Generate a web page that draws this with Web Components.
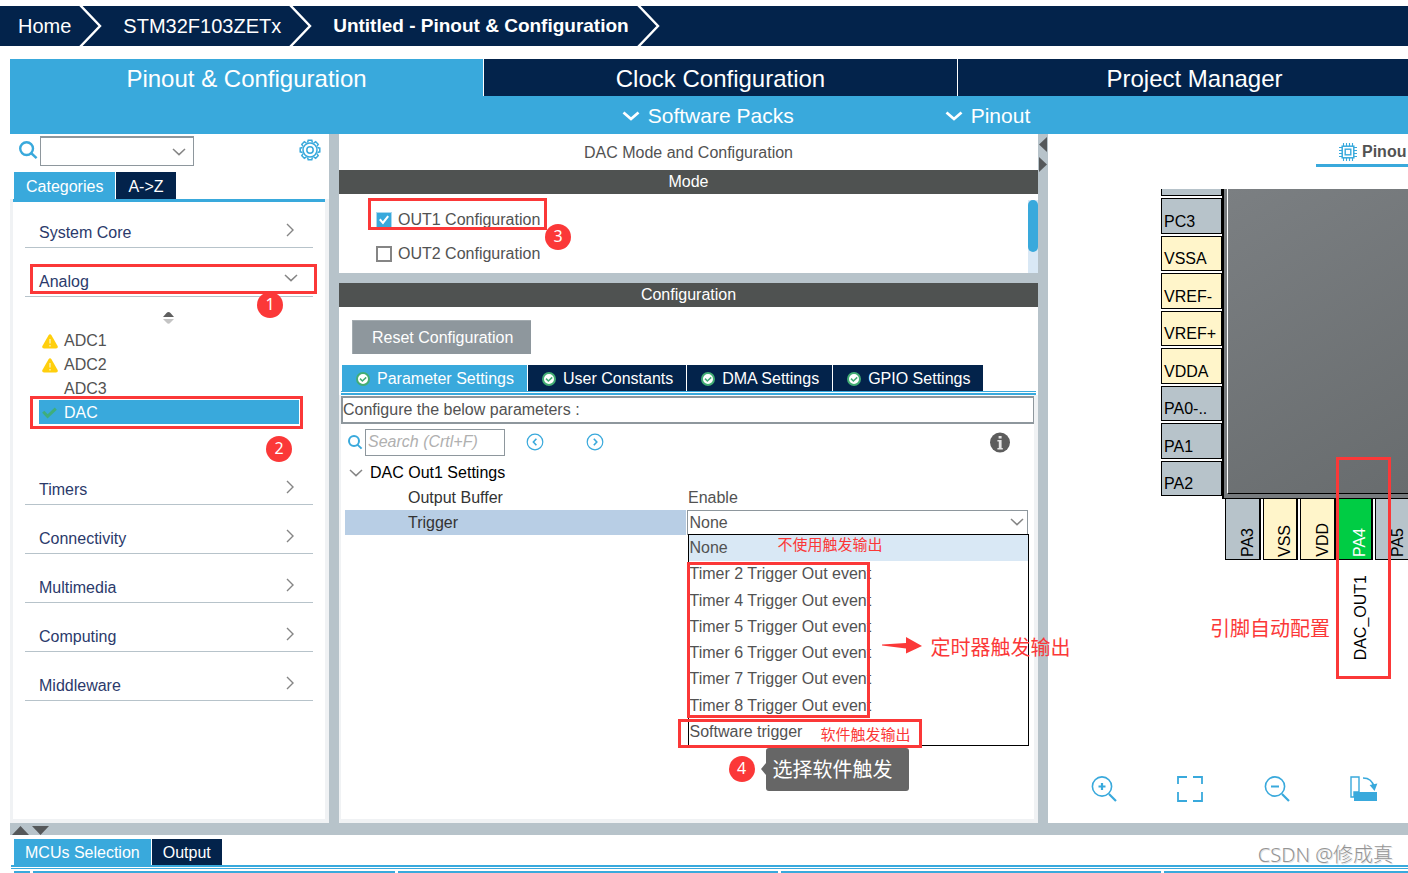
<!DOCTYPE html>
<html lang="zh-CN">
<head>
<meta charset="utf-8">
<meta name="viewport" content="width=device-width, initial-scale=1">
<title>STM32CubeMX - Pinout &amp; Configuration</title>
<style>
  :root {
    --navy: #03234b;
    --blue: #39a9dc;
    --steel: #b7c3ca;
    --frame: #f0f2f4;
    --border: #8e979d;
    --bar: #4f5251;
    --text: #525252;
    --mark: #fb3838;
    --cjk: "Liberation Sans", "Noto Sans CJK SC", sans-serif;
  }
  body {
    margin: 0;
    background: #fff;
    color: var(--text);
    font: 16px/24px "Liberation Sans", "Noto Sans CJK SC", sans-serif;
  }
</style>
</head>
<body>
<cube-app></cube-app>
<script>
const define = (name, html, setup) => {
  const template = document.createElement('template');
  template.innerHTML = html;
  customElements.define(name, class extends HTMLElement {
    constructor() {
      super();
      this.attachShadow({ mode: 'open' }).append(template.content.cloneNode(true));
    }
    connectedCallback() {
      if (setup) setup(this, this.shadowRoot);
    }
  });
};

/* ---------- icons ---------- */
const gearTeeth = Array.from({ length: 8 }, (_, i) =>
  `<path transform="rotate(${i * 45} 11 11)" d="M8.6 3.6 L9.2 1.2 H12.8 L13.4 3.6"/>`).join('');
const icons = {
  search: [20, 20, '<g fill="none" stroke="#39a9dc" stroke-width="2.4"><circle cx="7.6" cy="8.6" r="6.4"/><path d="M12 13 L17.6 18.2"/></g>'],
  searchSmall: [16, 16, '<g fill="none" stroke="#39a9dc" stroke-width="2"><circle cx="7" cy="7" r="5"/><path d="M10.4 10.6 L14.6 14.6"/></g>'],
  gear: [22, 22, `<g fill="none" stroke="#39a9dc" stroke-width="1.5"><circle cx="11" cy="11" r="7"/><circle cx="11" cy="11" r="3.2"/>${gearTeeth}</g>`],
  right: [8, 14, '<path d="M1 1 L7 7 L1 13" fill="none" stroke="#858585" stroke-width="1.4"/>'],
  down: [14, 8, '<path d="M1 1 L7 6.6 L13 1" fill="none" stroke="#858585" stroke-width="1.5"/>'],
  downBold: [18, 10, '<path d="M1.5 1.5 L9 8 L16.5 1.5" fill="none" stroke="#fff" stroke-width="2.8"/>'],
  sort: [11, 12, '<path d="M0 5 L3.5 1 Q5.5 -1 7.5 1 L11 5Z" fill="#5f5f5f"/><path d="M0 7 H11 L7.5 10.6 Q5.5 13 3.5 10.6Z" fill="#c4c4c4"/>'],
  warn: [16, 15, '<path d="M6.4 1.4 Q8 -1 9.6 1.4 L15.6 12 Q16.4 14.4 14 14.4 H2 Q-.4 14.4 .4 12Z" fill="#ffcf0d"/><path d="M8 5 V9.6 M8 11 V12.4" stroke="#fff6c8" stroke-width="1.2"/>'],
  check: [15, 12, '<path d="M1.2 4.8 L5.6 9.4 L13.8 1.6" fill="none" stroke="#3fae7c" stroke-width="3"/>'],
  ok: [14, 14, '<circle cx="7" cy="7" r="6" fill="#fff" stroke="#43ad74" stroke-width="2"/><path d="M4 6.6 L6.4 9 L10.2 5.4" fill="none" stroke="#43ad74" stroke-width="1.5"/>'],
  prev: [18, 18, '<g fill="none" stroke="#39a9dc"><circle cx="9" cy="9" r="7.8" stroke-width="1.2"/><path d="M10.4 5.8 L7.4 9 L10.4 12.2" stroke-width="1.6"/></g>'],
  next: [18, 18, '<g fill="none" stroke="#39a9dc"><circle cx="9" cy="9" r="7.8" stroke-width="1.2"/><path d="M7.8 5.8 L10.8 9 L7.8 12.2" stroke-width="1.6"/></g>'],
  info: [20, 21, '<circle cx="10" cy="10.5" r="10" fill="#5c5c5c"/><path d="M8.6 4 H11.6 V6.4 H8.6Z M7.4 8 H11.6 V16 H12.8 V17.4 H7.4 V16 H8.8 V9.4 H7.4Z" fill="#e4e4e4"/>'],
  chip: [18, 18, '<g fill="none" stroke="#39a9dc"><rect x="3.2" y="3.2" width="11.6" height="11.6" stroke-width="1.5"/><rect x="6.2" y="6.2" width="5.6" height="5.6" stroke-width="1.4"/><path stroke-width="1.1" d="M4.5 0V3 M7.5 0V3 M10.5 0V3 M13.5 0V3 M4.5 15V18 M7.5 15V18 M10.5 15V18 M13.5 15V18 M0 4.5H3 M0 7.5H3 M0 10.5H3 M0 13.5H3 M15 4.5H18 M15 7.5H18 M15 10.5H18 M15 13.5H18"/></g>'],
  zoomIn: [26, 26, '<g fill="none" stroke="#39a9dc"><circle cx="11" cy="10.5" r="9.6" stroke-width="1.6"/><path d="M18 18 L25 25" stroke-width="2.2"/><path d="M11 7 V14 M7.5 10.5 H14.5" stroke-width="2.2"/></g>'],
  zoomOut: [26, 26, '<g fill="none" stroke="#39a9dc"><circle cx="11" cy="10.5" r="9.6" stroke-width="1.6"/><path d="M18 18 L25 25" stroke-width="2.2"/><path d="M7 10.5 H15" stroke-width="2"/></g>'],
  fit: [26, 26, '<path d="M1 8 V1 H10 M16 1 H25 V8 M25 16 V25 H16 M10 25 H1 V16" fill="none" stroke="#39a9dc" stroke-width="1.8"/>'],
  rotate: [28, 26, '<path d="M1 1 H9 V16 H4 V21 H1Z" fill="none" stroke="#39a9dc" stroke-width="1.4"/><rect x="4" y="16" width="23" height="9" fill="#39a9dc"/><path d="M13 2 Q22 2 24 11" fill="none" stroke="#39a9dc" stroke-width="1.6"/><path d="M19.6 9 L27.4 7.6 L24.6 15Z" fill="#39a9dc"/>'],
  crumb: [23, 40, '<path d="M1 -1 L21 20 L1 41" fill="none" stroke="#fff" stroke-width="2.4"/>'],
  triUp: [17, 9, '<path d="M0 9 L8.5 0 L17 9Z" fill="#55585a"/>'],
  triDown: [17, 9, '<path d="M0 0 L8.5 9 L17 0Z" fill="#55585a"/>'],
  triLeft: [8, 15, '<path d="M8 0 L0 7.5 L8 15Z" fill="#55585a"/>'],
  triRight: [8, 15, '<path d="M0 0 L8 7.5 L0 15Z" fill="#55585a"/>'],
  arrow: [40, 18, '<path d="M0 7.6 L24 6 V0 L40 9 L24 16.4 V11.6 L0 8.6Z" fill="#fb3838"/>']
};
define('cube-icon', '<style>:host{display:block;flex:none;line-height:0}svg{display:block}</style><span></span>',
  (host, root) => {
    const [w, h, body] = icons[host.getAttribute('name')];
    root.querySelector('span').innerHTML =
      `<svg width="${w}" height="${h}" viewBox="0 0 ${w} ${h}" aria-hidden="true">${body}</svg>`;
  });

/* ---------- numbered badge and frame used by the walkthrough notes ---------- */
define('note-badge', `
<style>
  :host { position: absolute; display: block; width: 26px; height: 26px; border-radius: 13px;
    background: var(--mark); color: #fff; text-align: center; font: 16px/24px "Noto Sans", sans-serif; z-index: 3; }
</style><slot></slot>`);
define('note-frame', `
<style>
  :host { position: absolute; display: block; box-sizing: border-box; border: 3px solid var(--mark);
    pointer-events: none; z-index: 2; }
</style>`);
define('note-text', `
<style>
  :host { position: absolute; display: block; color: var(--mark); font: 15px/20px var(--cjk); white-space: nowrap; z-index: 3; }
  :host([large]) { font-size: 20px; line-height: 28px; }
</style><slot></slot>`);

/* ---------- small tab button ---------- */
define('cube-tab', `
<style>
  :host { display: block; }
  button { display: flex; align-items: center; gap: 7px; box-sizing: border-box; height: 26px; margin: 0; border: 0; padding: 2px 11px 0;
    background: var(--navy); color: #fff; font: inherit; white-space: nowrap; }
  :host([active]) button { background: var(--blue); }
  :host([tall]) button { height: 27px; padding: 2px 12px 0; }
  :host([wide]) button { padding: 2px 13px 0 14px; }
</style>
<button type="button" role="tab"><slot></slot></button>`);

/* ---------- breadcrumb ---------- */
define('cube-breadcrumb', `
<style>
  :host { display: block; margin-top: 6px; background: var(--navy); overflow: hidden; }
  nav { display: flex; height: 40px; padding-left: 18px; align-items: center; font-size: 20px; }
  a { color: #fff; text-decoration: none; white-space: nowrap; }
  cube-icon { margin: 0 21px 0 8px; }
  .now { font-size: 19px; font-weight: bold; }
</style>
<nav aria-label="Breadcrumb">
  <a href="#home">Home</a><cube-icon name="crumb"></cube-icon>
  <a href="#mcu">STM32F103ZETx</a><cube-icon name="crumb"></cube-icon>
  <a href="#project" class="now">Untitled - Pinout &amp; Configuration</a><cube-icon name="crumb"></cube-icon>
</nav>`);

/* ---------- main tabs and menu strip ---------- */
define('cube-header', `
<style>
  :host { display: block; margin: 13px 0 0 10px; overflow: hidden; }
  .tabs { display: grid; grid-template-columns: repeat(3, 1fr); gap: 1px; height: 37px; margin-right: -23px; }
  button { border: 0; padding: 2px 0 0; color: #fff; font: inherit; }
  .tabs button { background: var(--navy); font-size: 24px; }
  .tabs .on { background: var(--blue); }
  .menus { display: flex; justify-content: center; gap: 151px; height: 38px; padding-left: 234px; background: var(--blue); }
  .menus button { display: flex; align-items: center; gap: 8px; background: none; font-size: 21px; }
</style>
<div class="tabs" role="tablist">
  <button type="button" role="tab" class="on">Pinout &amp; Configuration</button>
  <button type="button" role="tab">Clock Configuration</button>
  <button type="button" role="tab">Project Manager</button>
</div>
<div class="menus">
  <button type="button"><cube-icon name="downBold"></cube-icon>Software Packs</button>
  <button type="button"><cube-icon name="downBold"></cube-icon>Pinout</button>
</div>`);

/* ---------- sidebar ---------- */
define('cube-category', `
<style>
  :host { display: block; position: relative; }
  button { display: flex; justify-content: space-between; width: 100%; height: 29px; border: 0;
    border-bottom: 1px solid var(--steel); padding: 0 19px 0 14px; background: none; color: #2b3a6b; font: inherit; text-align: left; }
  button span { line-height: 27px; }
  cube-icon { margin-top: 4px; }
  :host([open]) button { padding-right: 15px; }
  :host([open]) cube-icon { margin-top: 6px; }
</style>
<button type="button"><span></span></button>
<slot></slot>`,
  (host, root) => {
    const button = root.querySelector('button');
    root.querySelector('span').textContent = host.getAttribute('label');
    button.setAttribute('aria-expanded', host.hasAttribute('open'));
    const icon = document.createElement('cube-icon');
    icon.setAttribute('name', host.hasAttribute('open') ? 'down' : 'right');
    button.append(icon);
  });

define('cube-sidebar', `
<style>
  :host { display: flex; flex-direction: column; min-height: 0; background: var(--frame); }
  .filter { display: flex; align-items: center; height: 38px; padding: 0 9px; background: #fff; box-sizing: border-box; }
  .combo { position: relative; flex: none; width: 154px; margin: 0 105px 4px 1px; }
  select { appearance: none; display: block; width: 100%; height: 30px; border: 1px solid var(--border); border-top-width: 2px; background: #fff; font: inherit; }
  .combo cube-icon { position: absolute; right: 8px; top: 12px; }
  .filter > cube-icon { margin-bottom: 6px; }
  .tabs { display: flex; gap: 1px; padding-left: 4px; background: #fff; }
  .list { display: flex; flex-direction: column; gap: 20px; flex: 1; margin: 0 4px 4px 3px; border-top: 3px solid var(--blue);
    padding: 17px 12px 0; background: #fff; }
  .sort { display: flex; justify-content: center; padding: 15px 2px 4px 0; }
  ul { list-style: none; margin: 0 14px 0 14px; padding: 0 0 32px; }
  li { display: flex; align-items: center; box-sizing: border-box; height: 24px; padding: 2px 0 0 25px; position: relative; }
  li cube-icon { position: absolute; left: 3px; }
  li.on { background: var(--blue); color: #fff; }
</style>
<div class="filter">
  <cube-icon name="search"></cube-icon>
  <div class="combo"><select aria-label="Filter"><option></option></select><cube-icon name="down"></cube-icon></div>
  <cube-icon name="gear"></cube-icon>
</div>
<div class="tabs" role="tablist"><cube-tab active tall>Categories</cube-tab><cube-tab tall>A-&gt;Z</cube-tab></div>
<div class="list">
  <cube-category label="System Core"></cube-category>
  <cube-category label="Analog" open>
    <note-frame style="left:5px;top:-4px;width:287px;height:30px"></note-frame>
    <note-badge style="left:232px;top:24px">1</note-badge>
    <div class="sort"><cube-icon name="sort"></cube-icon></div>
    <ul>
      <li><cube-icon name="warn"></cube-icon>ADC1</li>
      <li><cube-icon name="warn"></cube-icon>ADC2</li>
      <li>ADC3</li>
      <li class="on"><cube-icon name="check"></cube-icon>DAC</li>
    </ul>
    <note-frame style="left:5px;top:128px;width:273px;height:33px"></note-frame>
    <note-badge style="left:241px;top:168px">2</note-badge>
  </cube-category>
  <cube-category label="Timers"></cube-category>
  <cube-category label="Connectivity"></cube-category>
  <cube-category label="Multimedia"></cube-category>
  <cube-category label="Computing"></cube-category>
  <cube-category label="Middleware"></cube-category>
</div>`);

/* ---------- mode panel ---------- */
define('cube-bar', `
<style>
  :host { display: block; height: 24px; background: var(--bar); color: #fff; text-align: center; }
  h2 { margin: 0; font: inherit; }
</style><h2><slot></slot></h2>`);

define('cube-mode', `
<style>
  :host { display: block; background: #fff; }
  h1 { height: 36px; margin: 0; font: inherit; line-height: 38px; text-align: center; }
  .options { position: relative; padding: 8px 0 3px 37px; }
  label { display: flex; align-items: center; gap: 6px; box-sizing: border-box; height: 34px; padding-top: 2px; }
  input { appearance: none; position: relative; box-sizing: border-box; width: 16px; height: 16px; margin: 0; border: 2px solid #858585; background: #fff; }
  input:checked { border: 1px solid #a9d8ef; background: var(--blue); }
  input:checked::after { content: ""; position: absolute; left: 2px; top: 2px; width: 10px; height: 10px; background: #fff;
    clip-path: polygon(0 50%, 16% 36%, 38% 62%, 84% 6%, 100% 18%, 40% 94%); }
  .track { position: absolute; right: 0; top: 6px; bottom: 0; width: 10px; background: #d9e8f5; }
  .thumb { height: 52px; border-radius: 5px; background: var(--blue); }
</style>
<h1>DAC Mode and Configuration</h1>
<cube-bar>Mode</cube-bar>
<div class="options">
  <label><input type="checkbox" checked>OUT1 Configuration</label>
  <label><input type="checkbox">OUT2 Configuration</label>
  <div class="track"><div class="thumb"></div></div>
  <note-frame style="left:29px;top:4px;width:179px;height:32px"></note-frame>
  <note-badge style="left:206px;top:30px">3</note-badge>
</div>`);

/* ---------- trigger drop-down ---------- */
define('cube-trigger', `
<style>
  :host { display: block; position: relative; }
  select { appearance: none; display: block; width: 100%; height: 25px; border: 1px solid var(--border); padding: 0 2px;
    background: #fff; color: var(--text); font: inherit; border-radius: 0; }
  .arrow { position: absolute; right: 4px; top: 8px; }
  ul { position: absolute; left: 1px; right: -1px; top: 24px; height: 210px; display: flex; flex-direction: column;
    list-style: none; margin: 0; border: 1px solid #000; padding: 0; background: #fff; }
  li { flex: 1; min-height: 0; padding-left: 1px; line-height: 26px; white-space: nowrap; }
  li.on { background: #d9e8f5; }
  .tip { position: absolute; left: 79px; top: 238px; padding: 8px 16px 7px 7px; border-radius: 3px; background: #666;
    color: #fff; font: 20px/28px var(--cjk); white-space: nowrap; z-index: 3; }
  .tip::before { content: ""; position: absolute; left: -5px; top: 15px; border: 6px solid transparent; border-left: 0; border-right: 5px solid #666; }
  .pointer { position: absolute; left: 195px; top: 127px; }
</style>
<select aria-label="Trigger"><option>None</option></select>
<cube-icon class="arrow" name="down"></cube-icon>
<ul role="listbox" aria-label="Trigger choices">
  <li role="option" class="on" aria-selected="true">None</li>
  <li role="option">Timer 2 Trigger Out event</li>
  <li role="option">Timer 4 Trigger Out event</li>
  <li role="option">Timer 5 Trigger Out event</li>
  <li role="option">Timer 6 Trigger Out event</li>
  <li role="option">Timer 7 Trigger Out event</li>
  <li role="option">Timer 8 Trigger Out event</li>
  <li role="option">Software trigger</li>
</ul>
<note-text style="left:91px;top:25px">不使用触发输出</note-text>
<note-frame style="left:0;top:52px;width:183px;height:156px"></note-frame>
<cube-icon class="pointer" name="arrow"></cube-icon>
<note-text large style="left:244px;top:124px">定时器触发输出</note-text>
<note-frame style="left:-9px;top:209px;width:244px;height:29px"></note-frame>
<note-text style="left:134px;top:215px">软件触发输出</note-text>
<note-badge style="left:42px;top:246px">4</note-badge>
<div class="tip">选择软件触发</div>`);

/* ---------- configuration panel ---------- */
define('cube-config', `
<style>
  :host { display: flex; flex-direction: column; flex: 1; min-height: 0; background: #fff; }
  .reset { align-self: flex-start; height: 34px; margin: 13px 0 11px 13px; border: 1px solid #a3abb0; border-width: 1px 0 0 1px; padding: 0 18px 0 19px;
    background: #8e979d; color: #fff; font: inherit; }
  .tabs { display: flex; gap: 1px; padding-left: 3px; }
  .body { flex: 1; border-style: solid; border-color: var(--frame); border-width: 0 4px 4px 2px; }
  .rule { height: 1px; margin: 0 2px; border-top: 1px solid var(--blue); border-bottom: 2px solid var(--blue); }
  .hint { height: 24px; margin-top: 1px; border: 2px solid var(--border); border-right-width: 1px; line-height: 23px; }
  .find { display: flex; align-items: center; height: 36px; padding: 0 24px 0 6px; }
  input { box-sizing: border-box; width: 140px; height: 27px; margin: 0 21px 0 2px; border: 1px solid var(--border); padding: 0 2px; font: inherit; }
  input::placeholder { color: #b0b0b0; font-style: italic; }
  .icon { width: 20px; border: 0; padding: 0; background: none; }
  .next { margin: 0 auto 0 40px; }
  table { width: calc(100% - 10px); margin-left: 4px; border-collapse: collapse; table-layout: fixed; }
  .names { width: 341px; }
  th, td { height: 25px; padding: 0; text-align: left; font-weight: normal; line-height: 24px; }
  .group { color: #000; }
  .group div { display: flex; align-items: center; gap: 7px; padding-left: 4px; }
  .name { padding-left: 63px; color: #333; }
  .value { padding-left: 2px; }
  .on .name { background: #b8cee5; border-right: 1px solid #fff; }
</style>
<cube-bar>Configuration</cube-bar>
<button type="button" class="reset">Reset Configuration</button>
<div class="tabs" role="tablist">
  <cube-tab wide active><cube-icon name="ok"></cube-icon>Parameter Settings</cube-tab>
  <cube-tab wide><cube-icon name="ok"></cube-icon>User Constants</cube-tab>
  <cube-tab wide><cube-icon name="ok"></cube-icon>DMA Settings</cube-tab>
  <cube-tab wide><cube-icon name="ok"></cube-icon>GPIO Settings</cube-tab>
</div>
<div class="rule"></div>
<div class="body">
  <div class="hint">Configure the below parameters :</div>
  <div class="find">
    <cube-icon name="searchSmall"></cube-icon>
    <input type="text" aria-label="Search" placeholder="Search (Crtl+F)">
    <button type="button" class="icon" aria-label="Previous"><cube-icon name="prev"></cube-icon></button>
    <button type="button" class="icon next" aria-label="Next"><cube-icon name="next"></cube-icon></button>
    <button type="button" class="icon" aria-label="Information"><cube-icon name="info"></cube-icon></button>
  </div>
  <table>
    <colgroup><col class="names"><col></colgroup>
    <tr><th colspan="2" class="group"><div><cube-icon name="down"></cube-icon>DAC Out1 Settings</div></th></tr>
    <tr><th class="name" scope="row">Output Buffer</th><td class="value">Enable</td></tr>
    <tr class="on"><th class="name" scope="row">Trigger</th><td><cube-trigger></cube-trigger></td></tr>
  </table>
</div>`);

/* ---------- pinout ---------- */
define('cube-pin', `
<style>
  :host { display: flex; align-items: flex-end; box-sizing: border-box; border: 1px solid #000; padding: 0 0 0 2px; background: var(--steel);
    color: #000; line-height: 23px; white-space: nowrap; overflow: hidden; }
  :host([power]) { background: #fff5ca; }
  :host([used]) { background: #00cc44; color: #fff; }
  :host([side]) { align-items: flex-end; justify-content: flex-end; border-right-width: 2px; border-top: 0; padding: 0 0 2px; line-height: 22px; }
  :host([side]) span { writing-mode: vertical-rl; transform: rotate(180deg); }
</style><span><slot></slot></span>`);

define('cube-pinout', `
<style>
  :host { display: flex; flex-direction: column; position: relative; min-width: 0; overflow: hidden; background: #fff; }
  .tab { align-self: flex-end; display: flex; align-items: center; gap: 5px; box-sizing: border-box; width: 92px; height: 33px; border: 0;
    border-bottom: 3px solid var(--blue); padding: 5px 0 0 23px; background: none; color: var(--text); font: inherit; font-weight: bold; white-space: nowrap; }
  .chip { display: grid; grid-template-columns: 61px 1fr; margin: 22px 0 0 113px; }
  .left { display: grid; grid-template-rows: 7px repeat(8, 1fr); gap: 2px; height: 307px; }
  .left :first-child { border-top: 0; }
  .die { box-sizing: border-box; height: 310px; border: solid #000; border-width: 0 0 1px 2px; padding: 0 0 4px 3px; background: #777b7e; }
  .die div { box-sizing: border-box; height: 100%; border-left: 1px solid #fff; border-bottom: 1px solid #000;
    background: linear-gradient(150deg, #7b7f82, #686c6e); }
  .bottom { grid-column: 2; display: grid; grid-template-columns: repeat(5, 1fr); gap: 2px; height: 61px; margin: 0 -3px 0 3px; }
  .signal { position: absolute; left: 301px; top: 441px; color: #000; writing-mode: vertical-rl; transform: rotate(180deg); }
  .tools { display: flex; justify-content: space-between; margin: auto 30px 21px 43px; }
  .tools button { border: 0; padding: 0; background: none; }
</style>
<button type="button" class="tab"><cube-icon name="chip"></cube-icon>Pinou</button>
<div class="chip">
  <div class="left">
    <cube-pin></cube-pin>
    <cube-pin>PC3</cube-pin><cube-pin power>VSSA</cube-pin><cube-pin power>VREF-</cube-pin><cube-pin power>VREF+</cube-pin>
    <cube-pin power>VDDA</cube-pin><cube-pin>PA0-..</cube-pin><cube-pin>PA1</cube-pin><cube-pin>PA2</cube-pin>
  </div>
  <div class="die"><div></div></div>
  <div class="bottom">
    <cube-pin side>PA3</cube-pin><cube-pin side power>VSS</cube-pin><cube-pin side power>VDD</cube-pin>
    <cube-pin side used>PA4</cube-pin><cube-pin side>PA5</cube-pin>
  </div>
</div>
<div class="signal">DAC_OUT1</div>
<note-frame style="left:288px;top:323px;width:55px;height:222px"></note-frame>
<note-text large style="left:162px;top:481px">引脚自动配置</note-text>
<div class="tools">
  <button type="button" aria-label="Zoom in"><cube-icon name="zoomIn"></cube-icon></button>
  <button type="button" aria-label="Fit"><cube-icon name="fit"></cube-icon></button>
  <button type="button" aria-label="Zoom out"><cube-icon name="zoomOut"></cube-icon></button>
  <button type="button" aria-label="Rotate"><cube-icon name="rotate"></cube-icon></button>
</div>`);

/* ---------- bottom panel ---------- */
define('cube-output', `
<style>
  :host { display: block; position: relative; height: 38px; overflow: hidden; background: #fff; }
  .tabs { display: flex; gap: 1px; padding: 4px 0 0 4px; }
  .rule { height: 1px; margin-left: 1px; border-top: 2px solid var(--blue); border-bottom: 1px solid var(--blue); }
  .head { display: grid; grid-template-columns: 16px 362fr 380fr 380fr 244fr; gap: 3px; height: 8px; margin: 2px 0 0 4px; }
  .head div { background: var(--blue); }
  .mark { position: absolute; right: 15px; bottom: 4px; color: #949494; text-shadow: 1px 1px #e4e4e4; font: 20px/28px "Noto Sans", "Noto Sans CJK SC", sans-serif; font-weight: 300; }
</style>
<div class="tabs" role="tablist"><cube-tab active>MCUs Selection</cube-tab><cube-tab>Output</cube-tab></div>
<div class="rule"></div>
<div class="head"><div></div><div></div><div></div><div></div><div></div></div>
<div class="mark">CSDN @修成真</div>`);

/* ---------- page ---------- */
define('cube-app', `
<style>
  :host { display: flex; flex-direction: column; height: 100vh; overflow: hidden; }
  main { flex: 1; display: grid; grid-template-columns: 319px minmax(0, 1fr) 360px; grid-template-rows: minmax(0, 1fr); gap: 10px; min-height: 0; margin-left: 10px; background: var(--steel); }
  .centre { display: flex; flex-direction: column; gap: 10px; min-width: 0; position: relative; z-index: 1; }
  .grips { position: absolute; right: -9px; top: 3px; display: grid; gap: 5px; }
  .split { display: flex; align-items: flex-end; gap: 3px; height: 12px; margin-left: 10px; padding-left: 2px; background: var(--steel); }
  cube-output { margin-left: 10px; }
</style>
<cube-breadcrumb></cube-breadcrumb>
<cube-header></cube-header>
<main>
  <cube-sidebar></cube-sidebar>
  <div class="centre">
    <cube-mode></cube-mode>
    <cube-config></cube-config>
    <div class="grips"><cube-icon name="triLeft"></cube-icon><cube-icon name="triRight"></cube-icon></div>
  </div>
  <cube-pinout></cube-pinout>
</main>
<div class="split"><cube-icon name="triUp"></cube-icon><cube-icon name="triDown"></cube-icon></div>
<cube-output></cube-output>`);
</script>
</body>
</html>
